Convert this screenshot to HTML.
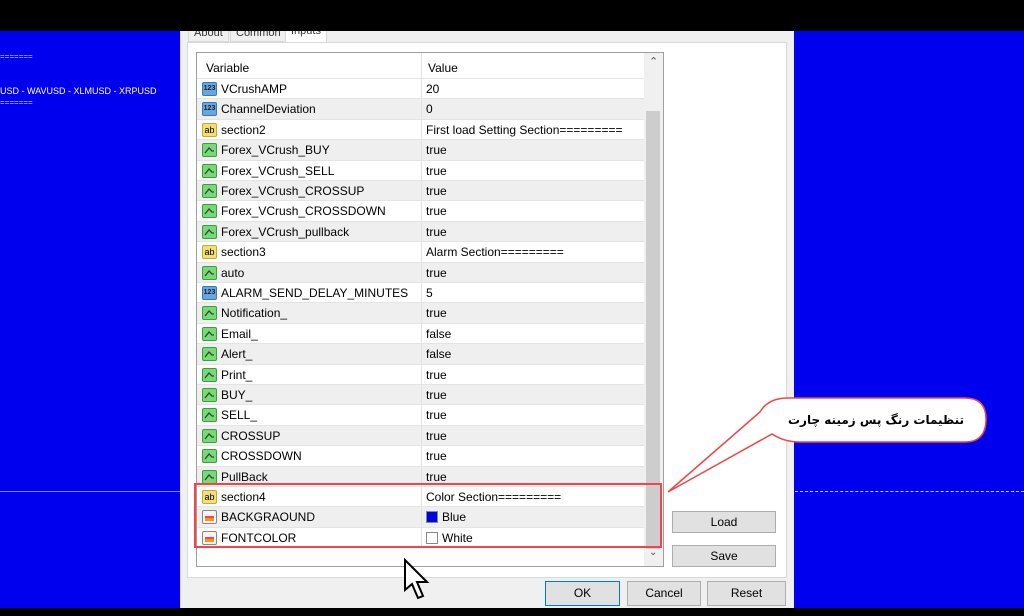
<!DOCTYPE html>
<html><head><meta charset="utf-8"><style>
*{margin:0;padding:0;box-sizing:border-box}
body{width:1024px;height:616px;background:#0000ee;position:relative;overflow:hidden;font-family:"Liberation Sans",sans-serif;font-size:12px;color:#000}
.abs{position:absolute}
.topbar{left:0;top:0;width:1024px;height:31px;background:#000;z-index:5}
.botbar{left:0;top:608px;width:1024px;height:8px;background:#000;z-index:5}
.dlg{left:180px;top:31px;width:614px;height:577px;background:#f0f0f0;border-left:1px solid #ddd}
.panel{left:187px;top:42px;width:600px;height:536px;background:#fff;border:1px solid #d9d9d9}
.list{left:196px;top:52px;width:468px;height:515px;background:#fff;border:1px solid #a0a0a0}
.row{position:absolute;left:0;width:447px;height:20.4px;border-bottom:1px solid #e4e4e4}
.row.g{background:#efefef}
.row .n{position:absolute;left:24px;top:3px;font-size:12px}
.row .v{position:absolute;left:229px;top:3px;font-size:12px}
.row .sep{position:absolute;left:224px;top:0;width:1px;height:100%;background:#e2e2e2}
.ic{position:absolute;left:5px;top:3px;width:15px;height:14px;border-radius:2px}
.i123{background:#6aa6dc;border:1px solid #3a78b8;font-size:7px;color:#123;text-align:center;line-height:12px;font-weight:bold}
.iab{background:#f2de7a;border:1px solid #c8a830;font-size:9px;text-align:center;line-height:12px}
.ibool{background:#7cd67c;border:1px solid #3b9f3b}
.icol{background:#f4f4f4;border:1px solid #888}
.btn{position:absolute;background:#e1e1e1;border:1px solid #adadad;text-align:center;font-size:12px}
.tab{position:absolute;top:24px;height:18px;font-size:11px;color:#333;border:1px solid #d9d9d9;background:#f0f0f0;padding:2px 5px}
</style></head><body>
<div class="abs topbar"></div>
<div class="abs botbar"></div>
<div class="abs" style="left:0;top:52px;color:#d0d0ff;font-size:8px">=======</div>
<div class="abs" style="left:0;top:86px;color:#fff;font-size:9px">USD - WAVUSD - XLMUSD - XRPUSD</div>
<div class="abs" style="left:0;top:98px;color:#d0d0ff;font-size:8px">=======</div>
<div class="abs" style="left:0;top:491px;width:180px;height:1px;background:#8888ff"></div>
<div class="abs" style="left:795px;top:491px;width:229px;height:0;border-top:1px dashed #ccccff"></div>
<div class="abs dlg"></div>
<div class="tab" style="left:188px">About</div>
<div class="tab" style="left:230px">Common</div>
<div class="tab" style="left:285px;background:#fff;top:22px;height:21px;border-bottom:none">Inputs</div>
<div class="abs panel"></div>
<div class="abs list">
<div style="position:absolute;left:0;top:0;width:447px;height:26px;border-bottom:1px solid #e4e4e4"><span style="position:absolute;left:9px;top:8px">Variable</span><span style="position:absolute;left:224px;top:0;width:1px;height:26px;background:#e2e2e2"></span><span style="position:absolute;left:231px;top:8px">Value</span></div>
<div id="rows"></div>
<div style="position:absolute;left:447px;top:0;width:19px;height:513px;background:#f0f0f0"><div style="position:absolute;left:2px;top:58px;width:14px;height:438px;background:#cdcdcd"></div><div style="position:absolute;left:5px;top:2px;font-size:11px;color:#555">&#8963;</div><div style="position:absolute;left:5px;top:494px;font-size:10px;color:#555">&#8964;</div></div>
</div>
<div class="btn" style="left:672px;top:511px;width:104px;height:22px;line-height:20px">Load</div>
<div class="btn" style="left:672px;top:545px;width:104px;height:22px;line-height:20px">Save</div>
<div class="btn" style="left:545px;top:581px;width:75px;height:25px;line-height:23px;border-color:#0078d7">OK</div>
<div class="btn" style="left:627px;top:581px;width:74px;height:25px;line-height:23px">Cancel</div>
<div class="btn" style="left:707px;top:581px;width:79px;height:25px;line-height:23px">Reset</div>
<div class="abs" style="left:194px;top:483px;width:468px;height:65px;border:2px solid #f0454a"></div>
<svg class="abs" style="left:660px;top:392px" width="340" height="110">
<path d="M128 6 H305 Q326 6 326 27 Q326 50 305 50 H140 Q124 50 112 42 L8 100 L100 20 Q108 6 128 6 Z" fill="#fff" stroke="#f0454a" stroke-width="1.5"/>
<text x="216" y="32" font-family="DejaVu Sans,sans-serif" font-size="12" font-weight="bold" text-anchor="middle" direction="rtl">تنظیمات رنگ پس زمینه چارت</text>
</svg>
<svg class="abs" style="left:402px;top:558px" width="30" height="44"><path d="M3 2 L3 32 L10 26 L16 40 L21 38 L15 24 L25 24 Z" fill="#fff" stroke="#000" stroke-width="2"/></svg>
<script>
var R=[["i","VCrushAMP","20"],["i","ChannelDeviation","0"],["s","section2","First load Setting Section========="],["b","Forex_VCrush_BUY","true"],["b","Forex_VCrush_SELL","true"],["b","Forex_VCrush_CROSSUP","true"],["b","Forex_VCrush_CROSSDOWN","true"],["b","Forex_VCrush_pullback","true"],["s","section3","Alarm Section========="],["b","auto","true"],["i","ALARM_SEND_DELAY_MINUTES","5"],["b","Notification_","true"],["b","Email_","false"],["b","Alert_","false"],["b","Print_","true"],["b","BUY_","true"],["b","SELL_","true"],["b","CROSSUP","true"],["b","CROSSDOWN","true"],["b","PullBack","true"],["s","section4","Color Section========="],["c","BACKGRAOUND","Blue"],["c","FONTCOLOR","White"]];
var h="";R.forEach(function(r,i){var ic="";if(r[0]=="i")ic='<div class="ic i123">123</div>';else if(r[0]=="s")ic='<div class="ic iab">ab</div>';else if(r[0]=="b")ic='<div class="ic ibool"><svg width="13" height="12" style="position:absolute;left:0;top:0"><path d="M2 9 L6 4 L9 7 L11 7" stroke="#1a5a1a" fill="none" stroke-width="1.3"/></svg></div>';else ic='<div class="ic icol"><div style="position:absolute;left:2px;top:5px;width:9px;height:5px;background:#f7941d;border-top:2px solid #f44"></div></div>';
var v=r[2];if(r[0]=="c")v='<span style="display:inline-block;width:12px;height:12px;vertical-align:-2px;margin-right:4px;border:1px solid #888;background:'+(v=="Blue"?"#0000e0":"#fff")+'"></span>'+v;
h+='<div class="row'+(i%2?' g':'')+'" style="top:'+(26+i*20.4)+'px">'+ic+'<span class="n">'+r[1]+'</span><span class="sep"></span><span class="v">'+v+'</span></div>';});
document.getElementById("rows").innerHTML=h;
</script>
</body></html>
